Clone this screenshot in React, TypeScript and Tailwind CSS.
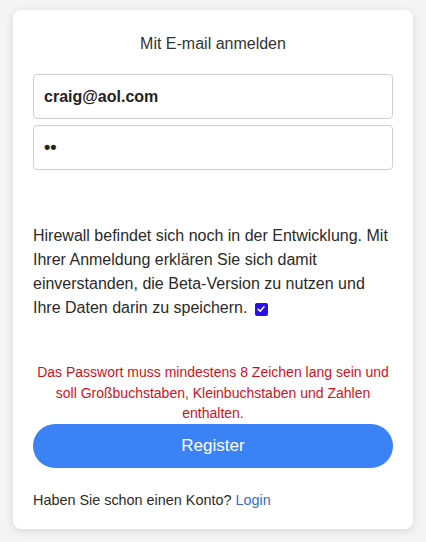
import React from 'react';

function CheckMark() {
  return (
    <span className="inline-flex items-center justify-center w-[13px] h-[13px] rounded-[2px] bg-[#2a10e8] align-[-1px] ml-[3px]">
      <svg viewBox="0 0 12 12" className="w-[10px] h-[10px]" fill="none">
        <path d="M2.5 6.3 L5 8.6 L9.6 3.4" stroke="#fff" strokeWidth="1.8" strokeLinecap="round" strokeLinejoin="round" />
      </svg>
    </span>
  );
}

export default function App() {
  return (
    <div className="min-h-[542px] bg-[#f4f4f4] pt-[10px] px-[13px] font-['Liberation_Sans',Arial,sans-serif]">
      <div className="bg-white rounded-lg shadow-[0_2px_8px_rgba(0,0,0,0.12)] px-5 pt-6 pb-5">
        <h2 className="text-center text-[16px] leading-5 text-[#333]">Mit E-mail anmelden</h2>

        <div className="mt-5 flex flex-col gap-[6px]">
          <input
            readOnly
            defaultValue="craig@aol.com"
            className="h-[45px] w-full rounded border border-[#cfcfcf] px-[10px] text-[16px] font-bold text-[#222] outline-none"
          />
          <input
            readOnly
            type="password"
            defaultValue="ab"
            className="h-[45px] w-full rounded border border-[#cfcfcf] px-[10px] text-[18px] font-bold text-[#222] outline-none"
          />
        </div>

        <p className="mt-[54px] text-[16px] leading-6 text-[#2a2a2a]">
          Hirewall befindet sich noch in der Entwicklung. Mit Ihrer Anmeldung erklären Sie sich damit
          einverstanden, die Beta-Version zu nutzen und Ihre Daten darin zu speichern. <CheckMark />
        </p>

        <p className="mt-[42px] text-center text-[14px] leading-[20.5px] text-[#d0111d]">
          Das Passwort muss mindestens 8 Zeichen lang sein und soll Großbuchstaben, Kleinbuchstaben und
          Zahlen enthalten.
        </p>

        <button
          type="button"
          className="h-[44px] w-full rounded-full bg-[#3b82f6] text-[17px] text-white"
        >
          Register
        </button>

        <div className="mt-[22px] mb-[-1px] text-[14.4px] leading-5 text-[#2a2a2a]">
          Haben Sie schon einen Konto? <span className="text-[#2f6fd1]">Login</span>
        </div>
      </div>
    </div>
  );
}
